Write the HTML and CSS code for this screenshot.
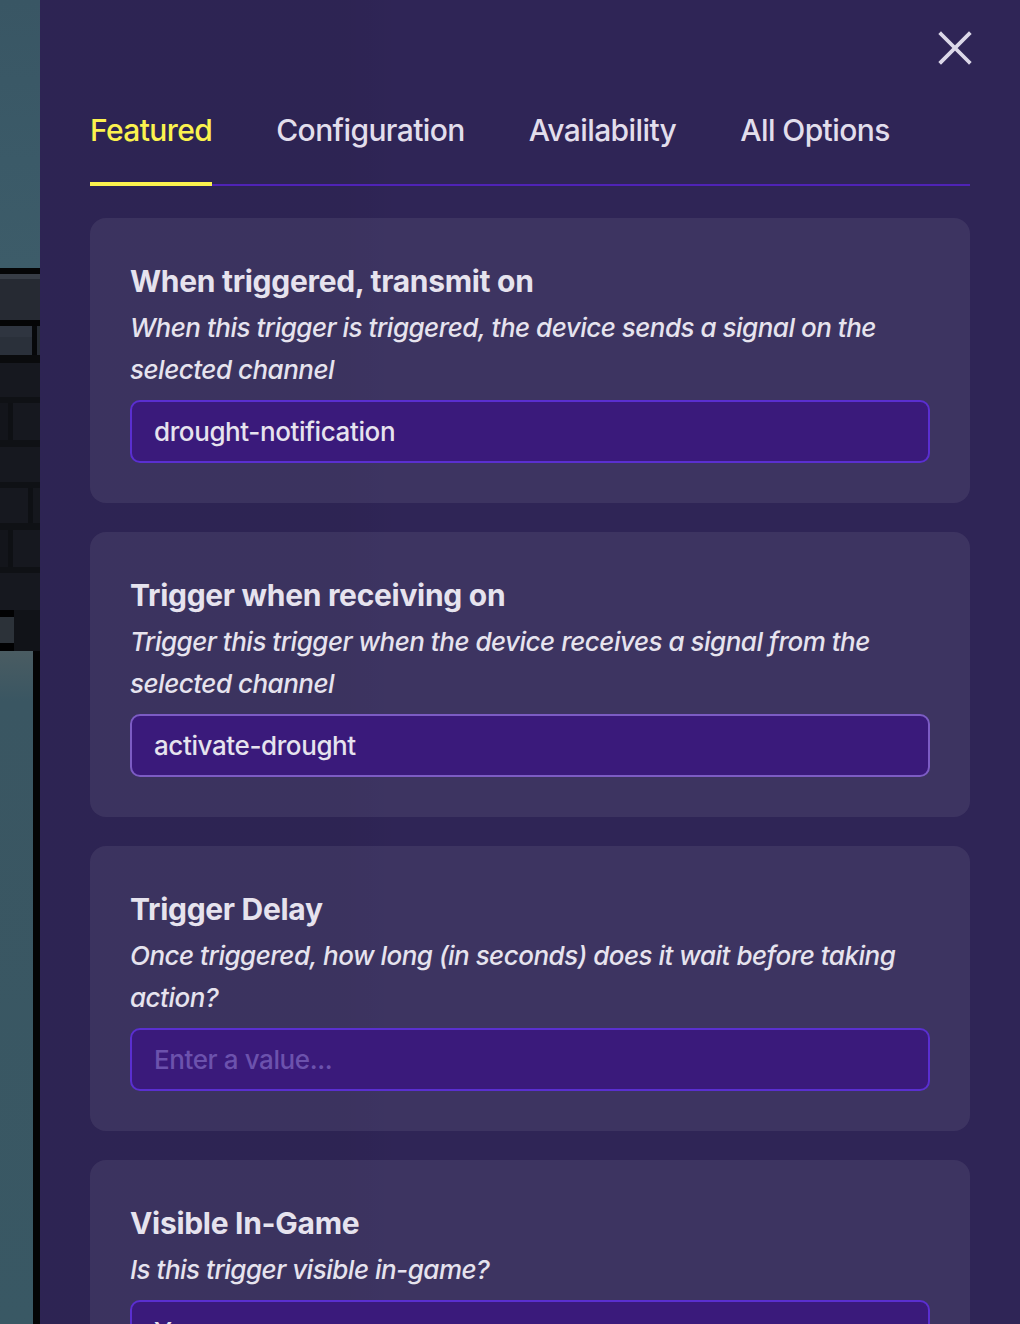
FILE: index.html
```html
<!DOCTYPE html>
<html lang="en">
<head>
<meta charset="utf-8">
<title>Trigger options</title>
<link rel="stylesheet" href="styles.css">
</head>
<body>
<div class="scene">
  <aside class="game">
    <div class="sky"></div>
    <div class="edge"></div>
    <div class="ledge-hi"></div>
    <div class="ledge"></div>
    <div class="edge"></div>
    <div class="tile"></div>
    <div class="edge small"></div>
    <div class="brick b34"></div>
    <div class="mortar"></div>
    <div class="brick left b37"></div>
    <div class="mortar m7"></div>
    <div class="brick b35"></div>
    <div class="mortar"></div>
    <div class="brick right b35"></div>
    <div class="mortar m7"></div>
    <div class="brick left b37"></div>
    <div class="mortar"></div>
    <div class="brick b37"></div>
    <div class="base-row"></div>
    <div class="base-row block"></div>
    <div class="base-row low"></div>
    <div class="water"></div>
  </aside>

  <main class="panel">
    <header class="panel-head">
      <button class="close" aria-label="Close">
        <svg width="34" height="34" viewBox="0 0 34 34" fill="none">
          <path d="M3 3 L31 31 M31 3 L3 31" stroke="#dcd8e8" stroke-width="3.8" stroke-linecap="square"/>
        </svg>
      </button>
    </header>

    <nav class="tabs">
      <div class="tab active">Featured</div>
      <div class="tab">Configuration</div>
      <div class="tab">Availability</div>
      <div class="tab">All Options</div>
    </nav>

    <section class="options">
      <div class="card">
        <h2 class="card-title">When triggered, transmit on</h2>
        <p class="card-desc">When this trigger is triggered, the device sends a signal on the selected channel</p>
        <div class="field">drought-notification</div>
      </div>
      <div class="card">
        <h2 class="card-title">Trigger when receiving on</h2>
        <p class="card-desc">Trigger this trigger when the device receives a signal from the selected channel</p>
        <div class="field soft">activate-drought</div>
      </div>
      <div class="card">
        <h2 class="card-title">Trigger Delay</h2>
        <p class="card-desc">Once triggered, how long (in seconds) does it wait before taking action?</p>
        <div class="field placeholder">Enter a value...</div>
      </div>
      <div class="card">
        <h2 class="card-title">Visible In-Game</h2>
        <p class="card-desc">Is this trigger visible in-game?</p>
        <div class="field">Yes</div>
      </div>
    </section>
  </main>
</div>
</body>
</html>
```

FILE: styles.css
```css
* { box-sizing: border-box; }

html, body {
  margin: 0;
  padding: 0;
  height: 1324px;
  overflow: hidden;
  background: #2f2556;
  font-family: Inter, "Noto Sans", "Liberation Sans", sans-serif;
}

.scene {
  display: flex;
  height: 1324px;
}

/* game world strip on the left */
.game {
  width: 40px;
  flex: 0 0 40px;
  display: flex;
  flex-direction: column;
  background: #15171d;
}
.sky {
  height: 268px;
  flex: 0 0 268px;
  background: linear-gradient(180deg, #395664 0%, #3b5a68 60%, #3d5c69 100%);
}
.edge { height: 6px; flex: 0 0 6px; background: #050506; }
.edge.small { height: 8px; flex-basis: 8px; background: #0a0b0d; }
.ledge-hi { height: 5px; flex: 0 0 5px; background: #383d46; }
.ledge { height: 41px; flex: 0 0 41px; background: #262a33; }
.tile {
  height: 29px;
  flex: 0 0 29px;
  background:
    linear-gradient(90deg, transparent 0 32px, #07080a 32px 37px, #262b34 37px 40px),
    linear-gradient(180deg, #2f3540 0 11px, #2a303a 11px 100%);
}
.brick { flex: 0 0 35px; background: #16181f; }
.brick.b34 { flex-basis: 34px; }
.brick.b35 { flex-basis: 35px; }
.brick.b37 { flex-basis: 37px; }
.brick.left {
  background: linear-gradient(90deg, #13151b 0 8px, #0e1014 8px 13px, #16181f 13px 100%);
}
.brick.right {
  background: linear-gradient(90deg, #16181f 0 28px, #0e1014 28px 33px, #15171d 33px 100%);
}
.mortar { flex: 0 0 6px; background: #0f1115; }
.mortar.m7 { flex-basis: 7px; }
.base-row {
  flex: 0 0 7px;
  background: linear-gradient(90deg, #020203 0 14px, #111318 14px 100%);
}
.base-row.block {
  flex-basis: 26px;
  background: linear-gradient(90deg, #2c3239 0 14px, #111318 14px 100%);
}
.base-row.low { flex-basis: 8px; }
.water {
  flex: 1;
  background:
    linear-gradient(90deg, transparent 0 33px, #040405 33px 40px),
    linear-gradient(180deg, #4a5c62 0, #3a5662 50px, #395864 100%);
}

/* settings panel */
.panel {
  flex: 1;
  padding: 0 50px;
  background:
    linear-gradient(90deg, rgba(0,0,0,0.04) 0 300px, rgba(0,0,0,0) 360px),
    #2f2556;
  color: #e6e3ee;
}

.panel-head {
  display: flex;
  justify-content: flex-end;
  padding-top: 31px;
}
.close {
  width: 34px;
  height: 34px;
  padding: 0;
  margin-right: -2px;
  border: 0;
  background: none;
  display: block;
}
.close svg { display: block; }

.tabs {
  margin-top: 47px;
  display: flex;
  gap: 64px;
  border-bottom: 2px solid #4f23b6;
}
.tab {
  position: relative;
  font-size: 30px;
  line-height: 36px;
  font-weight: 500;
  letter-spacing: -0.6px;
  color: #e2deec;
  padding-bottom: 36px;
}
.tab.active {
  color: #fbf24e;
}
.tab.active::after {
  content: "";
  position: absolute;
  left: 0;
  right: 0;
  bottom: -2px;
  height: 4px;
  background: #fbf24e;
}

.options {
  margin-top: 32px;
  display: flex;
  flex-direction: column;
  gap: 29px;
}
.card {
  background: rgba(255, 255, 255, 0.07);
  border-radius: 16px;
  padding: 45px 40px 40px 40px;
}
.card-title {
  margin: 0;
  font-size: 30px;
  line-height: 36px;
  font-weight: 700;
  letter-spacing: -0.3px;
  color: #e6e3ee;
}
.card-desc {
  margin: 8px 0 0 0;
  font-size: 26px;
  line-height: 42px;
  font-style: italic;
  font-weight: 500;
  letter-spacing: -0.5px;
  color: #e6e3ee;
  padding-right: 20px;
}
.field {
  margin-top: 9px;
  height: 63px;
  border: 2px solid #5a2fd0;
  border-radius: 10px;
  background: #3a1a7b;
  display: flex;
  align-items: center;
  padding-left: 22px;
  font-size: 26px;
  font-weight: 500;
  letter-spacing: -0.4px;
  color: #e6e3ee;
}
.field.soft {
  border-color: #7c5cc4;
}
.field.placeholder {
  color: #6c52ad;
}
```
